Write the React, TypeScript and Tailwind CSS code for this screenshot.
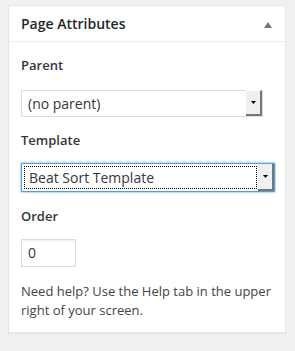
import React from "react";

function Arrow({ w = 5 }: { w?: number }) {
  return (
    <svg width={w} height={3} viewBox="0 0 5 3" className="block">
      <polygon points="0,0 5,0 2.5,3" fill="#000" />
    </svg>
  );
}

export default function App() {
  return (
    <div
      className="w-[295px] h-[351px] bg-[#f1f1f1] pt-[5px] pl-[8px]"
      style={{ fontFamily: '"Open Sans", "Noto Sans", sans-serif' }}
    >
      <div className="w-[278px] bg-white border border-[#e5e5e5] shadow-[0_1px_1px_rgba(0,0,0,0.04)]">
        <div className="h-[36px] border-b border-[#eeeeee] flex items-center justify-between pl-[12px] pr-[13px]">
          <h2 className="text-[14px] leading-[20px] font-semibold text-[#23282d]">Page Attributes</h2>
          <svg width="8" height="6" viewBox="0 0 8 6" className="block mt-[2px]">
            <polygon points="4,0 8,6 0,6" fill="#72777c" />
          </svg>
        </div>
        <div className="pl-[12px] pr-[10px] pb-[12px] text-[13px] text-[#444]">
          <p className="mt-[14px] leading-[18px] font-semibold text-[#32373c]">Parent</p>
          <div className="mt-[16px] w-[242px] h-[27px] border border-[#dddddd] bg-white flex">
            <div className="flex-1 pl-[6px] text-[14px] leading-[25px] text-[#32373c]">(no parent)</div>
            <div className="w-[16px] h-[26px] -mt-px bg-[#f0f0f0] border-r-2 border-b-2 border-[#777] border-t border-t-white flex items-center justify-center">
              <Arrow />
            </div>
          </div>
          <p className="mt-[14px] leading-[18px] font-semibold text-[#32373c]">Template</p>
          <div className="mt-[14px] w-[254px] h-[29px] border border-[#5b9dd9] shadow-[0_0_2px_rgba(30,140,190,0.8)] bg-white flex">
            <div className="flex-1 p-[2px] pr-[1px]">
              <div className="h-full border border-dotted border-black pl-[4px] text-[14px] leading-[21px] text-[#32373c]">
                Beat Sort Template
              </div>
            </div>
            <div className="w-[16px] h-full bg-[#f0f0f0] border-r-2 border-b-2 border-[#777] flex items-center justify-center">
              <Arrow />
            </div>
          </div>
          <p className="mt-[15px] leading-[18px] font-semibold text-[#32373c]">Order</p>
          <div className="mt-[14px] w-[55px] h-[28px] border border-[#dddddd] bg-white shadow-[inset_0_1px_2px_rgba(0,0,0,0.07)] pl-[6px] text-[14px] leading-[26px] text-[#32373c]">
            0
          </div>
          <p className="mt-[15px] leading-[19px]">
            Need help? Use the Help tab in the upper right of your screen.
          </p>
        </div>
      </div>
    </div>
  );
}
